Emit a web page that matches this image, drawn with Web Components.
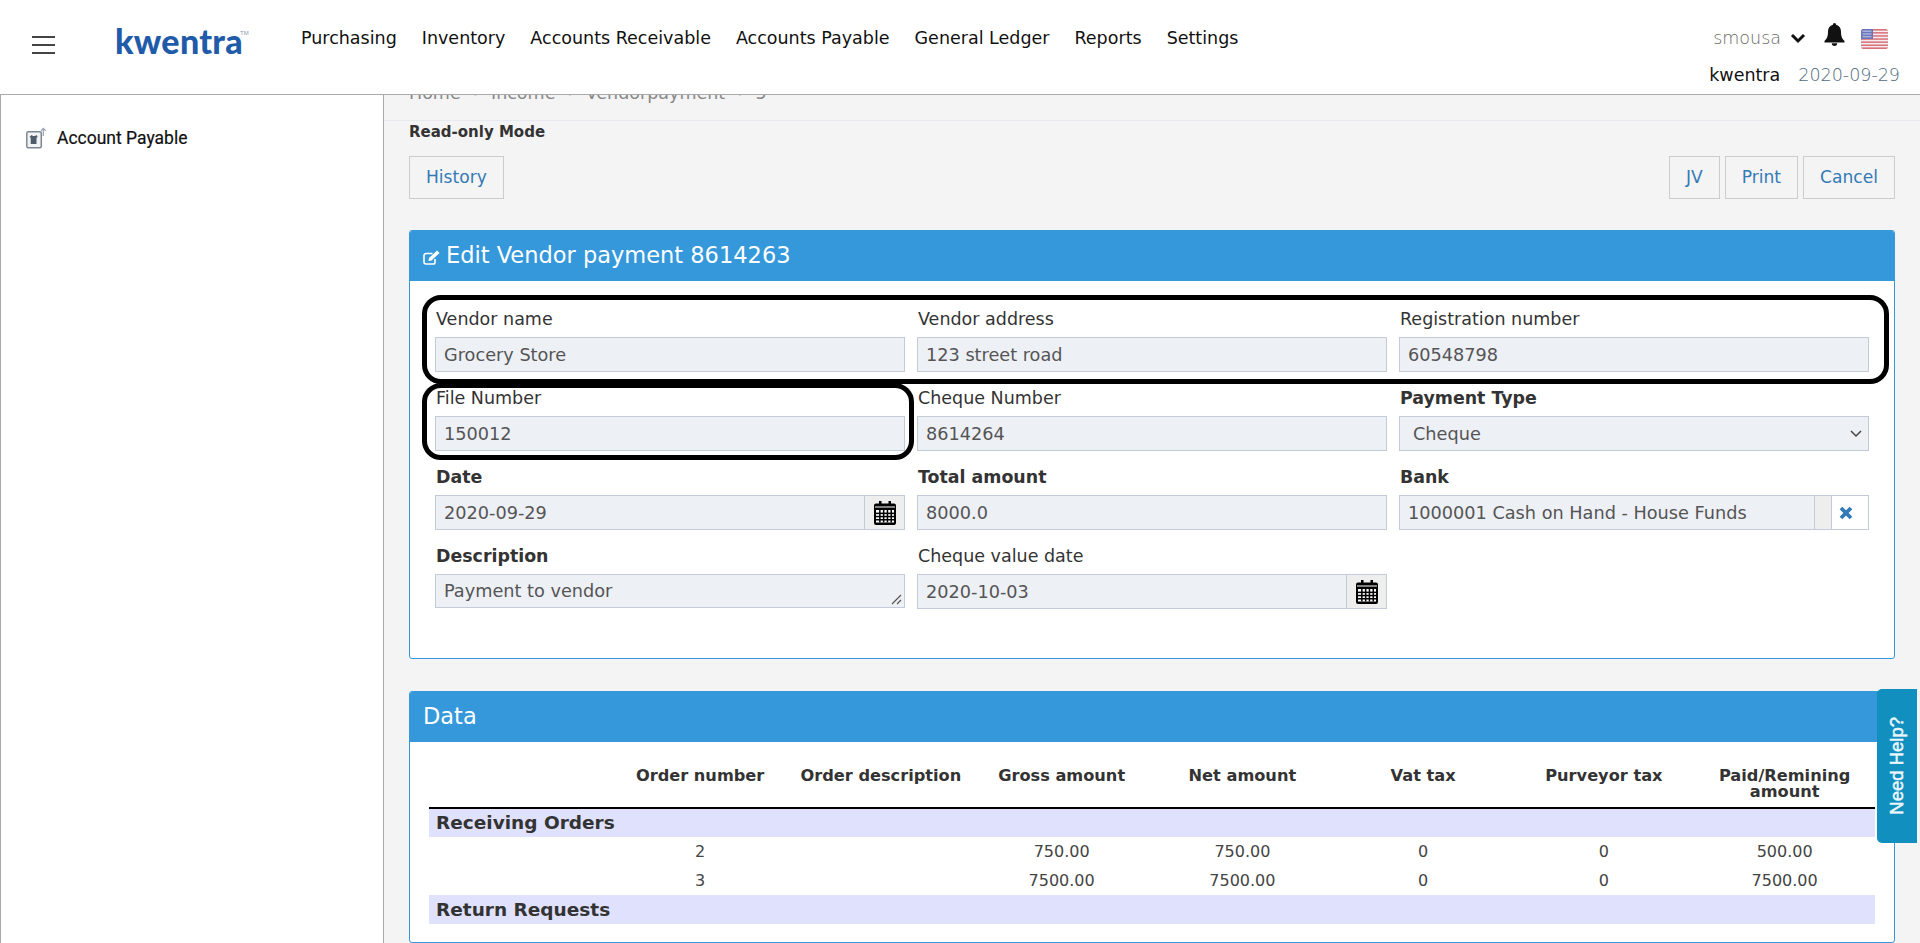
<!DOCTYPE html>
<html lang="en"><head><meta charset="utf-8"><title>Edit Vendor payment</title>
<style>html,body{margin:0;padding:0;background:#f4f4f4;overflow:hidden}body{font-family:"DejaVu Sans",sans-serif;font-size:17.5px;color:#333}</style>
</head><body>
<k-app>
  <k-topbar slot="top"></k-topbar>
  <k-sidenav slot="side"></k-sidenav>
  <k-breadcrumb></k-breadcrumb>
  <k-toolbar></k-toolbar>
  <k-panel heading="Edit Vendor payment 8614263" edit style="height:429px;margin-bottom:32px">
    <k-formgrid>
      <k-field label="Vendor name" value="Grocery Store"></k-field>
      <k-field label="Vendor address" value="123 street road"></k-field>
      <k-field label="Registration number" value="60548798"></k-field>
      <k-field label="File Number" value="150012"></k-field>
      <k-field label="Cheque Number" value="8614264"></k-field>
      <k-field label="Payment Type" value="Cheque" strong kind="select"></k-field>
      <k-field label="Date" value="2020-09-29" strong kind="date"></k-field>
      <k-field label="Total amount" value="8000.0" strong></k-field>
      <k-field label="Bank" value="1000001 Cash on Hand - House Funds" strong kind="lookup"></k-field>
      <k-field label="Description" value="Payment to vendor" strong kind="area"></k-field>
      <k-field label="Cheque value date" value="2020-10-03" kind="date"></k-field>
    </k-formgrid>
  </k-panel>
  <k-panel heading="Data" style="height:252px"><k-datatable></k-datatable></k-panel>
  <k-help slot="over"></k-help>
  <k-callout slot="over" style="left:422px;top:295px;width:1467px;height:89px"></k-callout>
  <k-callout slot="over" style="left:422px;top:383px;width:492px;height:77px"></k-callout>
</k-app>
<script>
function def(name, css, html){
  customElements.define(name, class extends HTMLElement{
    connectedCallback(){
      if(this.shadowRoot) return;
      const r=this.attachShadow({mode:'open'});
      const h=typeof html==='function'?html(this):html;
      r.innerHTML='<style>'+css+'</style>'+h;
    }
  });
}
def('k-app',`:host{display:block;position:relative;width:1920px;height:943px;overflow:hidden}
.body{display:flex;height:848px}
main{flex:1;min-width:0;padding:0 25px;overflow:hidden;background:#f4f4f4}`,
`<slot name="top"></slot><div class="body"><slot name="side"></slot><main><slot></slot></main></div><slot name="over"></slot>`);

def('k-topbar',`:host{display:flex;align-items:flex-start;box-sizing:border-box;height:95px;background:#fff;border-bottom:1px solid #aaa;color:#111;font-family:"DejaVu Sans",sans-serif;font-size:17.5px}
.burger{display:flex;flex-direction:column;gap:6px;width:23px;margin:36px 0 0 32px}
.burger i{display:block;height:2px;background:#444}
.logo{position:relative;margin:21px 0 0 60px;width:186px;font:900 34px/40px Lato,sans-serif;color:#1f5ba8;letter-spacing:.3px}
.logo sup{position:absolute;left:125px;top:8px;font:400 6px/8px "Liberation Sans",sans-serif;color:#8a9bb0;letter-spacing:0}
nav{display:flex;gap:25px;margin-top:26px;line-height:24px}
.right{margin-left:auto;display:flex;flex-direction:column;align-items:flex-end;padding-right:20px}
.r1{display:flex;align-items:center;height:24px;margin-top:26px;margin-right:12px;font-weight:200;color:#666}
.r1 svg{display:block}
.r2{display:flex;gap:18px;margin-top:13px;line-height:24px}
.r2 b{font-weight:400;color:#111}.r2 span{font-weight:200;color:#4f6b7d}`,
`<div class="burger"><i></i><i></i><i></i></div>
<div class="logo">kwentra<sup>TM</sup></div>
<nav><span>Purchasing</span><span>Inventory</span><span>Accounts Receivable</span><span>Accounts Payable</span><span>General Ledger</span><span>Reports</span><span>Settings</span></nav>
<div class="right"><div class="r1"><span>smousa</span>
<svg style="margin-left:9px" width="16" height="12" viewBox="0 0 16 12"><path d="M2 3l6 6 6-6" fill="none" stroke="#111" stroke-width="3"/></svg>
<svg style="margin-left:18px;margin-top:-7px" width="21" height="23" viewBox="0 0 21 23"><path fill="#111" d="M10.5 0a1.6 1.6 0 0 1 1.6 1.7C15.400 2.500 17 5.300 17 8.500c0 5 1 7 3.500 9.500v1.500H.5V18C3 15.500 4 13.500 4 8.500c0-3.200 1.600-6 4.900-6.800A1.600 1.600 0 0 1 10.500 0z"/><path fill="#111" d="M7.800 20.300h5.400a2.700 2.700 0 0 1-5.400 0z"/></svg>
<svg style="margin-left:16px;margin-top:2px" width="27" height="20" viewBox="0 0 27 20"><defs><clipPath id="fc"><rect width="27" height="20" rx="2.500"/></clipPath></defs><g clip-path="url(#fc)"><rect width="27" height="20" fill="#f4eded"/><g fill="#d9707a"><rect y="0" width="27" height="1.600"/><rect y="3.100" width="27" height="1.500"/><rect y="6.200" width="27" height="1.500"/><rect y="9.300" width="27" height="1.500"/><rect y="12.400" width="27" height="1.500"/><rect y="15.500" width="27" height="1.500"/><rect y="18.400" width="27" height="1.600"/></g><rect width="12" height="10" fill="#6a74b8"/><g fill="#aab0dc"><rect x="1.500" y="1.500" width="9" height="1.500"/><rect x="1.500" y="4.200" width="9" height="1.500"/><rect x="1.500" y="6.900" width="9" height="1.500"/></g></g></svg>
</div><div class="r2"><b>kwentra</b><span>2020-09-29</span></div></div>`);

def('k-sidenav',`:host{display:block;box-sizing:border-box;width:384px;height:100%;background:#fff;border-left:1px solid #aaa;border-right:1px solid #aaa;font-family:Roboto,sans-serif}
a{display:flex;align-items:center;margin:31px 0 0 25px;font-size:17.500px;line-height:24px;color:#111;-webkit-text-stroke:.2px #111}
svg{margin-right:11px}`,
`<a><svg width="20" height="22" viewBox="0 0 20 22"><rect x=".8" y="4.800" width="14.500" height="16" rx="1.500" fill="#f2f3f5" stroke="#7d8790" stroke-width="1.500"/><path d="M5.500 8l1.500 1h2l1.500-1 1.200 2-1.200.8V17h-5.800v-6.200L3.500 10z" fill="#4f5d6b"/><path d="M17.300 9V1.500M15 3.800l2.300-2.500 2.300 2.500" fill="none" stroke="#9aa5ae" stroke-width="1.200"/></svg>Account Payable</a>`);

def('k-breadcrumb',`:host{display:block;margin:-14px -25px 0;padding:0 25px;height:40px;box-sizing:border-box;border-bottom:1px solid #e6eaee;font-size:17.500px;line-height:24px;color:#888}
ol{display:flex;gap:12px;list-style:none;margin:0;padding:0}
li+li::before{content:"•";color:#d5d5d5;margin-right:13px;font-size:9px;vertical-align:1px}`,
`<ol><li>Home</li><li>Income</li><li>Vendorpayment</li><li>5</li></ol>`);

def('k-toolbar',`:host{display:block}
.ro{font-size:15px;font-weight:700;line-height:20px;margin-top:1px;color:#333}
.row{display:flex;gap:5px;margin-top:14px;margin-bottom:31px}
.row>:first-child{margin-right:auto}`,
`<div class="ro">Read-only Mode</div><div class="row"><k-button>History</k-button><k-button>JV</k-button><k-button>Print</k-button><k-button>Cancel</k-button></div>`);

def('k-button',`:host{display:block;box-sizing:border-box;height:43px;padding:0 16px;border:1px solid #ccc;font-size:17.100px;line-height:41px;color:#337ab7;background:#f4f4f4}`,`<slot></slot>`);

def('k-panel',`:host{display:block;box-sizing:border-box;background:#fff;border:1px solid #3498db;border-radius:3px;overflow:hidden}
header{display:flex;align-items:center;box-sizing:border-box;height:50px;padding:0 0 2px 13px;background:#3498db;color:#fff;font-size:22.500px}
header svg{margin:4px 6px 0 0}`,
el=>`<header>${el.hasAttribute('edit')?`<svg width="17" height="15" viewBox="0 0 17 15"><path d="M12 9v3.200a1.800 1.800 0 0 1-1.800 1.800H3A2 2 0 0 1 1 12V5.500a2 2 0 0 1 2-2h6.500" fill="none" stroke="#fff" stroke-width="1.600"/><path d="M6 8l8-7.500 2.500 2.500L8.500 10.500 5.500 11z" fill="#fff"/></svg>`:''}<span>${el.getAttribute('heading')}</span></header><slot></slot>`);

def('k-formgrid',`:host{display:grid;grid-template-columns:repeat(3,470px);column-gap:12px;row-gap:11px;padding:23px 25px 0}`,`<slot></slot>`);

const cal=`<svg width="22" height="24" viewBox="0 0 22 24"><path fill="#000" d="M5 0h2.500v2.500h7V0H17v2.500h3a2 2 0 0 1 2 2V22a2 2 0 0 1-2 2H2a2 2 0 0 1-2-2V4.500a2 2 0 0 1 2-2h3z"/><rect x="1" y="5.500" width="20" height="1" fill="#fff"/><g fill="#fff"><rect x="2" y="9" width="18" height="12.500"/></g><g fill="#000"><rect x="5.100" y="9" width="1.500" height="12.500"/><rect x="8.900" y="9" width="1.500" height="12.500"/><rect x="12.700" y="9" width="1.500" height="12.500"/><rect x="16.500" y="9" width="1.500" height="12.500"/><rect x="2" y="11.600" width="18" height="1.500"/><rect x="2" y="14.800" width="18" height="1.500"/><rect x="2" y="18" width="18" height="1.500"/></g></svg>`;

def('k-field',`:host{display:block;color:#333}
label{display:block;height:33px;box-sizing:border-box;padding:3px 0 0 1px;line-height:24px}
.strong{font-weight:700;font-size:17.400px}
.box{display:flex;box-sizing:border-box;height:35px;background:#edf0f5;border:1px solid #c3cbd9;color:#555;font-size:17.700px;line-height:34px}
.v{flex:1;padding-left:8px;white-space:nowrap;overflow:hidden}
.add{display:flex;align-items:center;justify-content:center;width:39px;background:#eee;border-left:1px solid #c3cbd9}
.sel .v{padding-left:13px}
.sel svg{margin:13px 6px 0 0}
.area{height:34px;position:relative;line-height:33px}
.area svg{position:absolute;right:2px;bottom:2px}
.gap{width:16px;background:#eee;border-left:1px solid #c3cbd9}
.x{display:flex;align-items:center;width:37px;box-sizing:border-box;padding-left:7px;background:#fff;border-left:1px solid #c3cbd9}`,
el=>{const k=el.getAttribute('kind')||'', v=el.getAttribute('value');
 let inner=`<div class="v">${v}</div>`, cls='box';
 if(k==='date') inner+=`<div class="add">${cal}</div>`;
 if(k==='select'){cls+=' sel';inner+=`<svg width="12" height="8" viewBox="0 0 12 8"><path d="M1 1l5 5 5-5" fill="none" stroke="#444" stroke-width="1.500"/></svg>`;}
 if(k==='area'){cls+=' area';inner+=`<svg width="11" height="11" viewBox="0 0 11 11"><path d="M1 10L10 1M6 10l4-4" stroke="#555" stroke-width="1.200" fill="none"/></svg>`;}
 if(k==='lookup'){inner+=`<div class="gap"></div><div class="x"><svg width="14" height="14" viewBox="0 0 14 14"><path d="M2 2l10 10M12 2L2 12" stroke="#337ab7" stroke-width="3.800"/></svg></div>`;}
 return `<label class="${el.hasAttribute('strong')?'strong':''}">${el.getAttribute('label')}</label><div class="${cls}">${inner}</div>`;});

def('k-datatable',`:host{display:block;padding:25px 19px 0}
table{width:100%;table-layout:fixed;border-collapse:collapse;color:#444;font-size:16px}
th{height:41px;box-sizing:border-box;padding:1px 0 0;vertical-align:top;font-size:16.200px;font-weight:700;line-height:16px;color:#333;border-bottom:2px solid #000}
td{height:29px;padding:0;text-align:center;line-height:29px}
tr.s td{text-align:left;padding-left:7px;background:#dfe1fd;font-size:18.500px;font-weight:700;color:#333}
tr.first td{height:28px;line-height:28px}`,
`<table><thead><tr><th></th><th>Order number</th><th>Order description</th><th>Gross amount</th><th>Net amount</th><th>Vat tax</th><th>Purveyor tax</th><th>Paid/Remining amount</th></tr></thead><tbody>
<tr class="s first"><td colspan="8">Receiving Orders</td></tr>
<tr><td></td><td>2</td><td></td><td>750.00</td><td>750.00</td><td>0</td><td>0</td><td>500.00</td></tr>
<tr><td></td><td>3</td><td></td><td>7500.00</td><td>7500.00</td><td>0</td><td>0</td><td>7500.00</td></tr>
<tr class="s"><td colspan="8">Return Requests</td></tr></tbody></table>`);

def('k-help',`:host{position:absolute;left:1877px;top:689px;width:40px;height:154px;box-sizing:border-box;background:#1190c0;border-radius:5px 0 0 5px;display:flex;align-items:center;justify-content:center;color:#eaf6fb;font:18.500px "Liberation Sans",sans-serif}
span{writing-mode:vertical-rl;transform:rotate(180deg);-webkit-text-stroke:.5px #eaf6fb}`,`<span>Need Help?</span>`);

def('k-callout',`:host{position:absolute;box-sizing:border-box;border:5px solid #000;border-radius:19px;pointer-events:none}`,``);
</script>
</body></html>
